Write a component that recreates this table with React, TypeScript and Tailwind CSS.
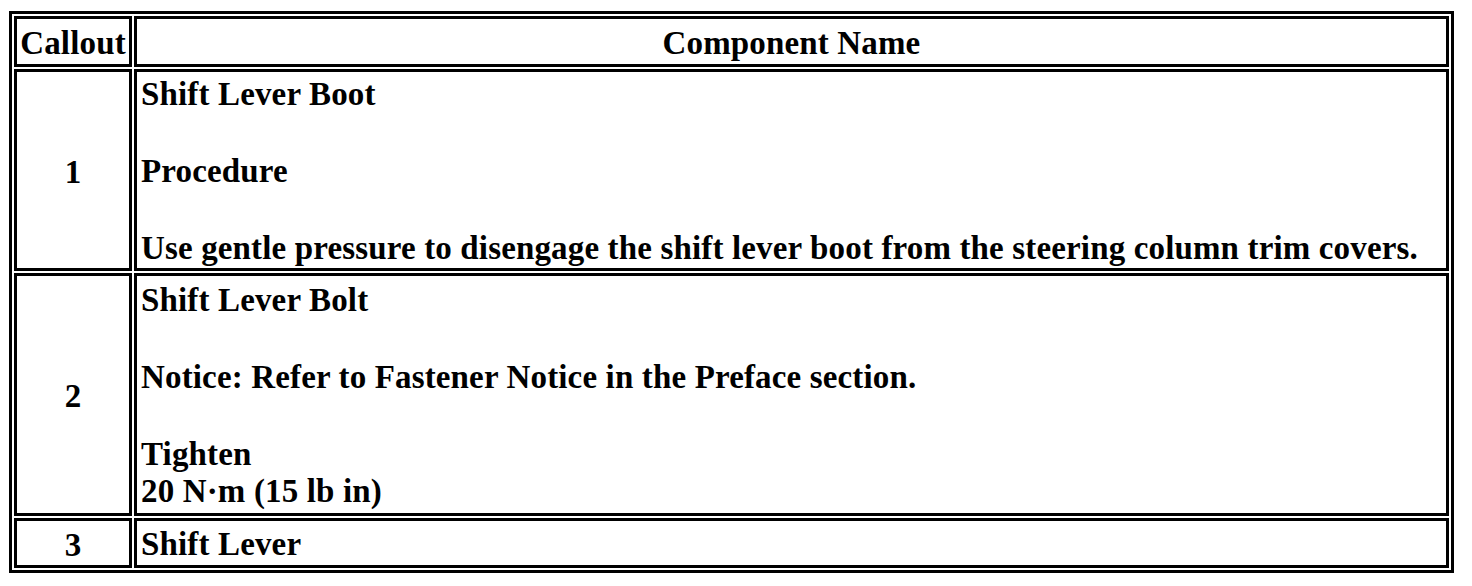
const rows = [
  {
    callout: "1",
    height: "h-[201px]",
    paras: [["Shift Lever Boot"], ["Procedure"], ["Use gentle pressure to disengage the shift lever boot from the steering column trim covers."]],
  },
  {
    callout: "2",
    height: "h-[243px]",
    paras: [["Shift Lever Bolt"], ["Notice: Refer to Fastener Notice in the Preface section."], ["Tighten", "20 N·m (15 lb in)"]],
  },
  {
    callout: "3",
    height: "h-[50px]",
    paras: [["Shift Lever"]],
  },
];

export default function App() {
  return (
    <div className="min-h-[586px] bg-white pt-[11px] pl-[9px] font-['Liberation_Serif','Times_New_Roman',serif] text-[33px] leading-[37px] tracking-[0.15px] font-bold text-black">
      <table className="w-[1445px] table-fixed border-separate border-spacing-[2px] border-[3px] border-black">
        <colgroup>
          <col className="w-[118px]" />
          <col />
        </colgroup>
        <thead>
          <tr>
            <th className="h-[51px] border-[3px] border-black px-0 pt-[3px] text-center align-middle">Callout</th>
            <th className="h-[51px] border-[3px] border-black px-[2px] pt-[3px] text-center align-middle">Component Name</th>
          </tr>
        </thead>
        <tbody>
          {rows.map((row) => (
            <tr key={row.callout}>
              <td className={`${row.height} border-[3px] border-black px-[2px] pt-[4px] text-center align-middle`}>
                {row.callout}
              </td>
              <td className={`${row.height} border-[3px] border-black pt-[4px] pb-[1px] pl-[4px] pr-[2px] text-left align-middle`}>
                <div className="flex flex-col gap-[40px]">
                  {row.paras.map((p, i) => (
                    <p key={i}>
                      {p.map((line, j) => (
                        <span key={j} className="block">
                          {line}
                        </span>
                      ))}
                    </p>
                  ))}
                </div>
              </td>
            </tr>
          ))}
        </tbody>
      </table>
    </div>
  );
}
